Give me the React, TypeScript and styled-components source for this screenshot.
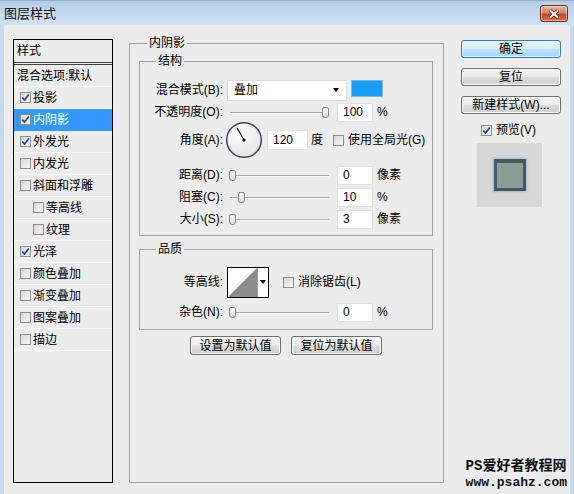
import React from "react";
import styled, { createGlobalStyle, css } from "styled-components";

const GlobalStyle = createGlobalStyle`
  html, body {
    margin: 0;
    padding: 0;
    background: #ececec;
  }
  body {
    font-family: "Liberation Sans", "Noto Sans CJK SC", sans-serif;
    font-size: 12px;
    color: #000;
  }
`;

type Item = { label: string; checked?: boolean; active?: boolean; indent?: boolean };

const styleItems: Item[] = [
  { label: "投影", checked: true },
  { label: "内阴影", checked: true, active: true },
  { label: "外发光", checked: true },
  { label: "内发光" },
  { label: "斜面和浮雕" },
  { label: "等高线", indent: true },
  { label: "纹理", indent: true },
  { label: "光泽", checked: true },
  { label: "颜色叠加" },
  { label: "渐变叠加" },
  { label: "图案叠加" },
  { label: "描边" },
];

const Check = ({ checked }: { checked?: boolean }) => (
  <CheckBox>
    {checked && (
      <svg width="9" height="9" viewBox="0 0 9 9">
        <path d="M1.3 4.6 L3.6 7 L7.8 1.6" fill="none" stroke="#23408a" strokeWidth="1.7" />
      </svg>
    )}
  </CheckBox>
);

const Slider = ({ value }: { value: number }) => (
  <Track>
    <Thumb style={{ left: Math.round((value / 100) * 93) }} />
  </Track>
);

const AngleDial = ({ angle }: { angle: number }) => {
  const r = 14;
  const rad = (angle * Math.PI) / 180;
  const x = 19 + Math.cos(rad) * r;
  const y = 19 - Math.sin(rad) * r;
  return (
    <Dial width="38" height="38" viewBox="0 0 38 38">
      <defs>
        <radialGradient id="dialFill" cx="40%" cy="35%" r="70%">
          <stop offset="0%" stopColor="#ffffff" />
          <stop offset="100%" stopColor="#e2e2e2" />
        </radialGradient>
      </defs>
      <circle cx="19" cy="19" r="17.3" fill="url(#dialFill)" stroke="#3e4b5b" strokeWidth="1.5" />
      <line x1="19" y1="19" x2={x} y2={y} stroke="#111" strokeWidth="1.2" />
      <circle cx="19" cy="19" r="1.6" fill="#000" />
    </Dial>
  );
};

const ContourPicker = () => (
  <Contour>
    <svg width="29" height="29" viewBox="0 0 29 29">
      <rect width="29" height="29" fill="#fff" />
      <polygon points="0,29 29,0 29,29" fill="#8c8c8c" />
    </svg>
    <ContourArrow>
      <Caret />
    </ContourArrow>
  </Contour>
);

export default function App() {
  return (
    <>
      <GlobalStyle />
      <Window>
        <TitleBar>
          <Title>图层样式</Title>
          <CloseButton>
            <svg width="14" height="10" viewBox="0 0 14 10">
              <path d="M3 1.5 L11 8.5 M11 1.5 L3 8.5" stroke="#5a1d12" strokeWidth="3.6" />
              <path d="M3 1.5 L11 8.5 M11 1.5 L3 8.5" stroke="#fff" strokeWidth="2" />
            </svg>
          </CloseButton>
        </TitleBar>

        <Body>
          <StyleList>
            <ListHeader>样式</ListHeader>
            <ListRow>混合选项:默认</ListRow>
            {styleItems.map((item) => (
              <ListRow key={item.label} $active={item.active} $indent={item.indent}>
                <Check checked={item.checked} />
                <span>{item.label}</span>
              </ListRow>
            ))}
          </StyleList>

          <MainGroup>
            <Legend $offset={8}>内阴影</Legend>

            <SubGroup $pt={10} $pb={5}>
              <Legend $offset={16}>结构</Legend>
              <Row $h={22}>
                <Label>混合模式(B):</Label>
                <Select>
                  <span>叠加</span>
                  <Caret />
                </Select>
                <Swatch />
              </Row>
              <Row $h={22}>
                <Label>不透明度(O):</Label>
                <Slider value={100} />
                <ValueInput readOnly value="100" />
                <Unit>%</Unit>
              </Row>
              <Row $h={34}>
                <Label>角度(A):</Label>
                <AngleDial angle={120} />
                <AngleInput readOnly value="120" />
                <Unit $ml={3}>度</Unit>
                <CheckLabel $ml={10}>
                  <Check />
                  <span>使用全局光(G)</span>
                </CheckLabel>
              </Row>
              <Row $h={22} $mt={7}>
                <Label>距离(D):</Label>
                <Slider value={0} />
                <ValueInput readOnly value="0" />
                <Unit>像素</Unit>
              </Row>
              <Row $h={22}>
                <Label>阻塞(C):</Label>
                <Slider value={10} />
                <ValueInput readOnly value="10" />
                <Unit>%</Unit>
              </Row>
              <Row $h={22}>
                <Label>大小(S):</Label>
                <Slider value={0} />
                <ValueInput readOnly value="3" />
                <Unit>像素</Unit>
              </Row>
            </SubGroup>

            <SubGroup $pt={8} $pb={6} $mt={5}>
              <Legend $offset={16}>品质</Legend>
              <Row $h={34}>
                <Label>等高线:</Label>
                <ContourPicker />
                <CheckLabel $ml={14}>
                  <Check />
                  <span>消除锯齿(L)</span>
                </CheckLabel>
              </Row>
              <Row $h={22} $mt={2}>
                <Label>杂色(N):</Label>
                <Slider value={0} />
                <ValueInput readOnly value="0" />
                <Unit>%</Unit>
              </Row>
            </SubGroup>

            <DefaultsBar>
              <Button $w={91} $h={19}>设置为默认值</Button>
              <Button $w={91} $h={19}>复位为默认值</Button>
            </DefaultsBar>
          </MainGroup>

          <SideColumn>
            <Button $primary>确定</Button>
            <Button>复位</Button>
            <Button>新建样式(W)...</Button>
            <PreviewToggle>
              <Check checked />
              <span>预览(V)</span>
            </PreviewToggle>
            <PreviewBox>
              <PreviewSwatch />
            </PreviewBox>
          </SideColumn>
        </Body>

        <Watermark>
          <div>PS爱好者教程网</div>
          <div>www.psahz.com</div>
        </Watermark>
      </Window>
    </>
  );
}

const Window = styled.div`
  position: relative;
  width: 574px;
  height: 494px;
  display: flex;
  flex-direction: column;
  background: #ececec;
  overflow: hidden;
`;

const TitleBar = styled.div`
  height: 25px;
  flex-shrink: 0;
  box-sizing: border-box;
  display: flex;
  align-items: center;
  justify-content: space-between;
  padding: 1px 6px 0 4px;
  background: linear-gradient(#b4cde8, #c6daef 55%, #d0e1f2);
  border-top: 1px solid #93aecb;
`;

const Title = styled.div`
  font-size: 13px;
  line-height: 16px;
  color: #111;
`;

const CloseButton = styled.div`
  width: 28px;
  height: 17px;
  box-sizing: border-box;
  display: flex;
  align-items: center;
  justify-content: center;
  border: 1px solid #6d2d22;
  border-radius: 3px;
  background: linear-gradient(#eab1a3, #d9836d 45%, #c4452b 55%, #d2704f);
  box-shadow: inset 0 0 0 1px rgba(255, 255, 255, 0.45);
`;

const Body = styled.div`
  flex: 1;
  display: flex;
  align-items: flex-start;
  padding: 10px 9px 0;
  border-left: 4px solid #c7d9ec;
  border-right: 4px solid #c7d9ec;
`;

const StyleList = styled.div`
  width: 100px;
  height: 444px;
  box-sizing: border-box;
  margin-top: 4px;
  flex-shrink: 0;
  border: 1px solid #000;
  display: flex;
  flex-direction: column;
`;

const ListHeader = styled.div`
  height: 25px;
  box-sizing: border-box;
  padding: 3px 0 0 3px;
  line-height: 16px;
  border-bottom: 3px double #444;
`;

const ListRow = styled.div<{ $active?: boolean; $indent?: boolean }>`
  height: 22px;
  box-sizing: border-box;
  display: flex;
  align-items: center;
  padding-left: ${(p) => (p.$indent ? 19 : 6)}px;
  border-bottom: 1px solid #fbfbfb;
  line-height: 16px;
  &:nth-child(2) {
    padding-left: 3px;
  }
  ${(p) =>
    p.$active &&
    css`
      background: #3399ff;
      color: #fff;
      border-bottom-color: #3399ff;
    `}
`;

const CheckBox = styled.span`
  width: 11px;
  height: 11px;
  box-sizing: border-box;
  flex-shrink: 0;
  display: inline-flex;
  align-items: center;
  justify-content: center;
  margin-right: 2px;
  border: 1px solid #8f8f8f;
  background: linear-gradient(135deg, #d6d6d6, #f8f8f8);
`;

const MainGroup = styled.fieldset`
  width: 315px;
  height: 448px;
  box-sizing: border-box;
  flex-shrink: 0;
  margin: 0 0 0 16px;
  padding: 2px 10px 0 9px;
  border: 1px solid #a3a3a3;
  min-width: 0;
`;

const Legend = styled.legend<{ $offset: number }>`
  margin-left: ${(p) => p.$offset}px;
  padding: 0 2px;
  font-size: 12px;
  line-height: 16px;
`;

const SubGroup = styled.fieldset<{ $pt: number; $pb: number; $mt?: number }>`
  margin: ${(p) => p.$mt ?? 0}px 0 0;
  padding: ${(p) => p.$pt}px 0 ${(p) => p.$pb}px 0;
  border: 1px solid #a3a3a3;
  min-width: 0;
`;

const Row = styled.div<{ $h: number; $mt?: number }>`
  height: ${(p) => p.$h}px;
  margin-top: ${(p) => p.$mt ?? 0}px;
  display: flex;
  align-items: center;
  line-height: 16px;
`;

const Label = styled.div`
  width: 83px;
  flex-shrink: 0;
  text-align: right;
  white-space: nowrap;
  font-size: 12px;
`;

const Select = styled.div`
  width: 120px;
  height: 21px;
  box-sizing: border-box;
  margin-left: 4px;
  display: flex;
  align-items: center;
  justify-content: space-between;
  padding: 0 7px 0 6px;
  background: #fff;
  border: 1px solid #dcdcdc;
`;

const Caret = styled.span`
  width: 0;
  height: 0;
  border-left: 3.5px solid transparent;
  border-right: 3.5px solid transparent;
  border-top: 4px solid #000;
`;

const Swatch = styled.div`
  width: 30px;
  height: 15px;
  margin-left: 5px;
  margin-top: -4px;
  background: #179bf3;
  box-shadow: 0 0 0 1px #7fb8e0;
`;

const Track = styled.div`
  position: relative;
  width: 100px;
  height: 11px;
  margin-left: 6px;
  flex-shrink: 0;
  &::before {
    content: "";
    position: absolute;
    left: 1px;
    right: 0;
    top: 5px;
    height: 1px;
    background: #a9a9a9;
    border-bottom: 1px solid #fdfdfd;
  }
`;

const Thumb = styled.span`
  position: absolute;
  top: 0;
  width: 7px;
  height: 11px;
  box-sizing: border-box;
  border: 1px solid #8a8a8a;
  border-radius: 2px 2px 3px 3px;
  background: linear-gradient(#ffffff, #dadada);
`;

const fieldText = css`
  box-sizing: border-box;
  padding: 0 0 0 5px;
  background: #fff;
  border: 1px solid #e1e1e1;
  outline: none;
  font: 12px "Liberation Sans", "Noto Sans CJK SC", sans-serif;
  color: #000;
`;

const ValueInput = styled.input`
  ${fieldText}
  width: 36px;
  height: 19px;
  margin-left: 8px;
`;

const AngleInput = styled.input`
  ${fieldText}
  width: 41px;
  height: 20px;
  margin-left: 4px;
`;

const Unit = styled.span<{ $ml?: number }>`
  margin-left: ${(p) => p.$ml ?? 4}px;
  white-space: nowrap;
`;

const Dial = styled.svg`
  margin-left: 2px;
  flex-shrink: 0;
`;

const CheckLabel = styled.span<{ $ml: number }>`
  display: inline-flex;
  align-items: center;
  margin-left: ${(p) => p.$ml}px;
  white-space: nowrap;
  & > span:last-child {
    margin-left: 2px;
  }
`;

const Contour = styled.div`
  width: 42px;
  height: 31px;
  box-sizing: border-box;
  margin-left: 4px;
  display: flex;
  border: 1px solid #000;
  background: #fff;
`;

const ContourArrow = styled.div`
  flex: 1;
  display: flex;
  align-items: center;
  justify-content: center;
  border-left: 1px solid #9a9a9a;
`;

const DefaultsBar = styled.div`
  margin-top: 6px;
  display: flex;
  justify-content: center;
  gap: 10px;
`;

const Button = styled.div<{ $primary?: boolean; $w?: number; $h?: number }>`
  width: ${(p) => p.$w ?? 100}px;
  height: ${(p) => p.$h ?? 18}px;
  box-sizing: border-box;
  display: flex;
  align-items: center;
  justify-content: center;
  border: 1px solid #707070;
  border-radius: 3px;
  background: linear-gradient(#f3f3f3, #ebebeb 48%, #dddddd 52%, #cfcfcf);
  box-shadow: inset 0 0 0 1px #fbfbfb;
  font-size: 12px;
  line-height: 16px;
  white-space: nowrap;
  ${(p) =>
    p.$primary &&
    css`
      border-color: #3c7fb1;
      background: linear-gradient(#e9f6fd, #d6effc 48%, #bce4fa 52%, #a6d9f4);
      box-shadow: inset 0 0 0 1px #ddf1fc;
    `}
`;

const SideColumn = styled.div`
  width: 100px;
  flex-shrink: 0;
  margin: 5px 0 0 17px;
  display: flex;
  flex-direction: column;
  gap: 10px;
`;

const PreviewToggle = styled.div`
  height: 16px;
  margin: -2px 0 0 20px;
  display: flex;
  align-items: center;
  line-height: 16px;
  & > span:last-child {
    margin-left: 2px;
  }
`;

const PreviewBox = styled.div`
  width: 65px;
  height: 64px;
  margin: -5px 0 0 16px;
  display: flex;
  align-items: center;
  justify-content: center;
  background: #d7d7d7;
`;

const PreviewSwatch = styled.div`
  width: 32px;
  height: 32px;
  box-sizing: border-box;
  border: 3px solid #4a5661;
  border-top-width: 4px;
  background: #8c9c97;
  box-shadow: 0 0 2px 1px rgba(120, 170, 210, 0.6);
`;

const Watermark = styled.div`
  position: absolute;
  right: 7px;
  bottom: 4px;
  font-family: "Liberation Mono", "Noto Sans CJK SC", monospace;
  font-weight: bold;
  color: #111;
  & > div:first-child {
    font-size: 14px;
    line-height: 17px;
  }
  & > div:last-child {
    font-size: 13px;
    line-height: 15px;
  }
`;
